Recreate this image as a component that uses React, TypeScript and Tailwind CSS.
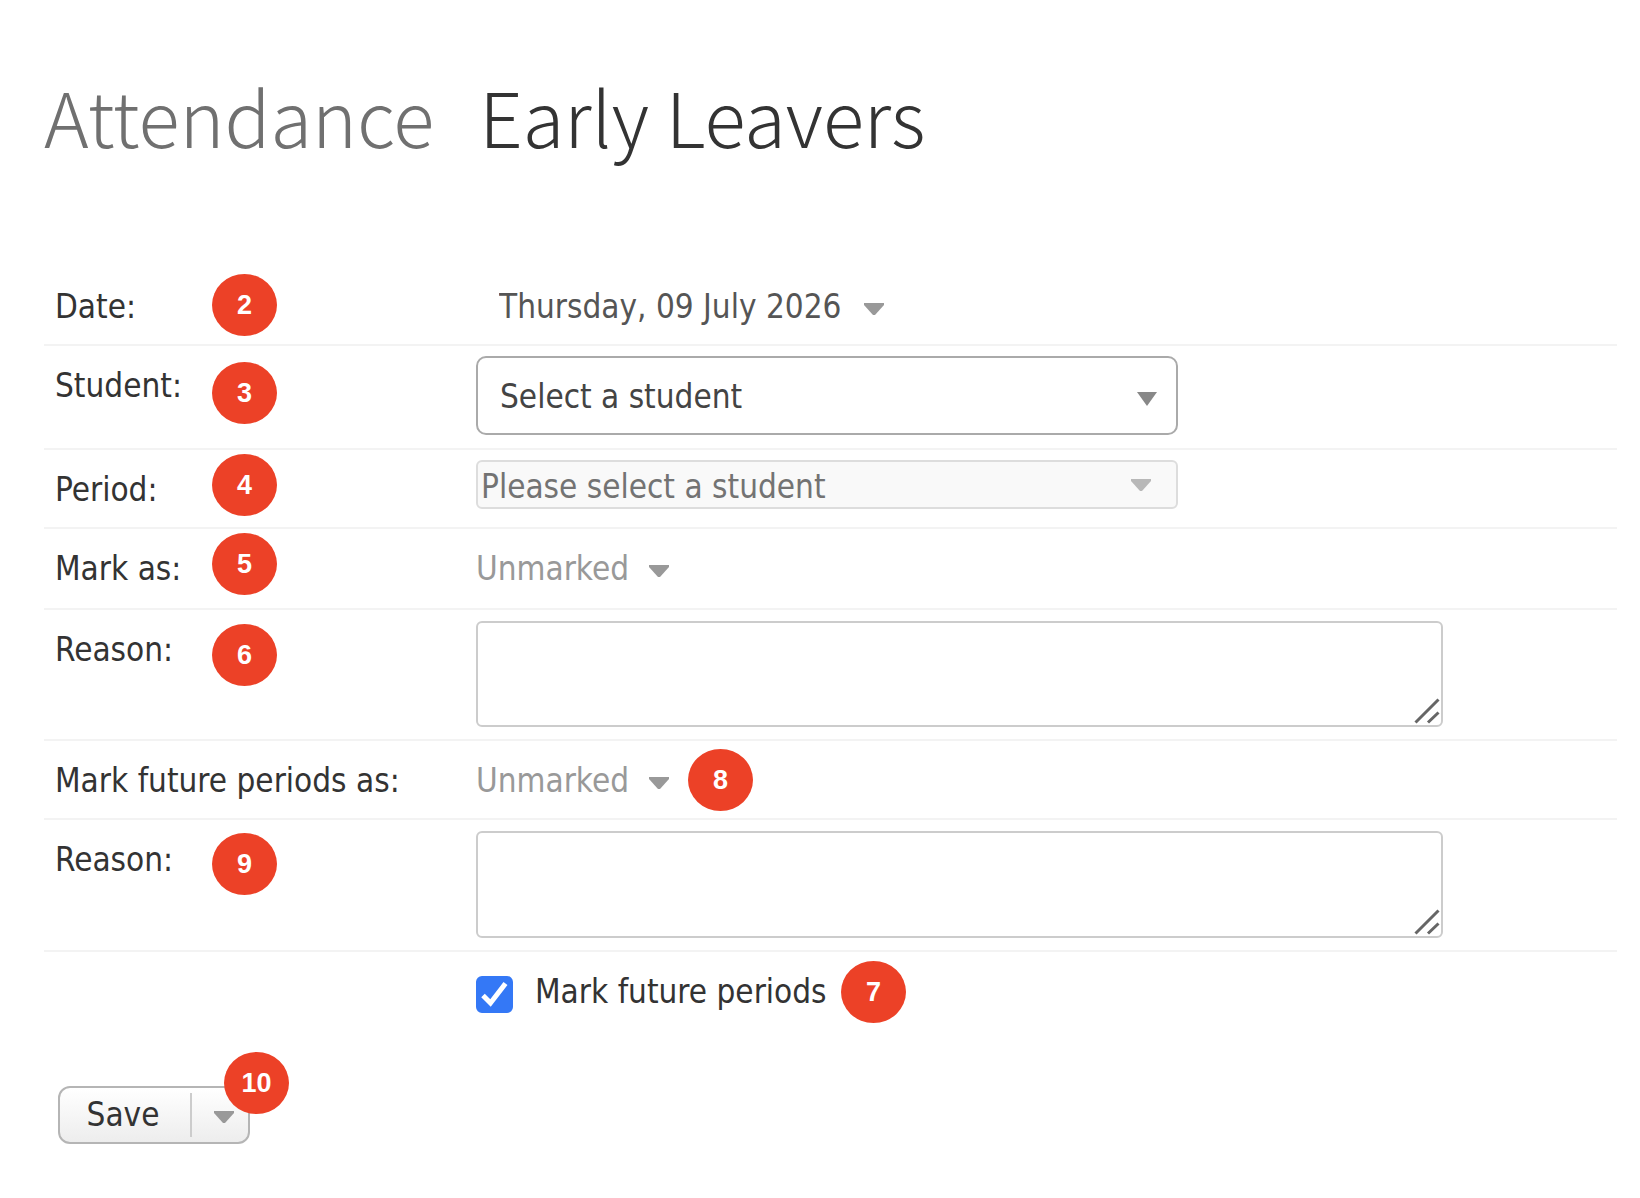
import { useState, type ReactNode } from 'react';
import { clsx } from 'clsx';

function Caret({ className }: { className?: string }) {
  return (
    <svg
      viewBox="0 0 20 12"
      className={clsx('pointer-events-none h-3 w-5 fill-current', className)}
      aria-hidden="true"
    >
      <path d="M0 0H20V2L11 12H9L0 2Z" />
    </svg>
  );
}

function Badge({ value, className }: { value: number; className?: string }) {
  return (
    <span
      className={clsx(
        'absolute flex h-[62px] w-[65px] items-center justify-center rounded-[50%] bg-[#ec4127] font-["Liberation_Sans",sans-serif] text-[27px] leading-none font-bold text-white',
        className
      )}
    >
      {value}
    </span>
  );
}

interface RowProps {
  label: string;
  htmlFor: string;
  className?: string;
  badge?: ReactNode;
  children: ReactNode;
}

function Row({ label, htmlFor, className, badge, children }: RowProps) {
  return (
    <div className={clsx('relative flex border-b-2 border-[#f3f3f3]', className)}>
      <label htmlFor={htmlFor} className="w-[432px] shrink-0 pt-5 pl-[11px]">
        {label}
      </label>
      {children}
      {badge}
    </div>
  );
}

function MarkSelect({ id }: { id: string }) {
  return (
    <div className="relative pt-5">
      <select id={id} className="w-[194px] appearance-none text-[#999]">
        <option>Unmarked</option>
        <option>Present</option>
        <option>Absent</option>
      </select>
      <Caret className="absolute top-9 left-[173px] text-[#999]" />
    </div>
  );
}

function ReasonBox({ id }: { id: string }) {
  return (
    <div className="relative mt-[11px] mb-3 w-[967px]">
      <textarea
        id={id}
        className="block h-full w-full resize-none rounded-md border-2 border-[#ccc] bg-white px-2"
      />
      <svg
        viewBox="0 0 26 26"
        className="pointer-events-none absolute right-[3px] bottom-[3px] size-[26px] stroke-[#666] stroke-[3]"
        aria-hidden="true"
      >
        <path d="M1.5 24.5L24.5 1.5M14 24.5L24.5 14.5" fill="none" />
      </svg>
    </div>
  );
}

export default function App() {
  const [markFuture, setMarkFuture] = useState(true);

  return (
    <main className="min-h-screen bg-white pt-[65px] pr-[23px] pb-12 pl-11 font-['DejaVu_Sans_Condensed','Noto_Sans',sans-serif] text-[33px] leading-10 text-[#333]">
      <h1 className="flex gap-[45px] font-['Noto_Sans_CJK_JP',sans-serif] text-[76px] leading-[100px] font-light whitespace-nowrap">
        <span className="text-[#707070]">Attendance</span>
        <span>Early Leavers</span>
      </h1>

      <form className="mt-[102px]" onSubmit={(e) => e.preventDefault()}>
        <Row
          label="Date:"
          htmlFor="date"
          className="h-[79px]"
          badge={<Badge value={2} className="top-[7px] left-[168px]" />}
        >
          <div className="relative pt-5 pl-[23px]">
            <select id="date" className="w-[388px] appearance-none text-[#555]">
              <option>Thursday, 09 July 2026</option>
            </select>
            <Caret className="absolute top-9 left-[388px] text-[#999]" />
          </div>
        </Row>

        <Row
          label="Student:"
          htmlFor="student"
          className="h-[104px]"
          badge={<Badge value={3} className="top-4 left-[168px]" />}
        >
          <div className="relative pt-2.5">
            <select
              id="student"
              className="h-[79px] w-[702px] appearance-none rounded-[10px] border-2 border-[#aaa] bg-white px-[22px] pt-0.5 text-[#444]"
            >
              <option>Select a student</option>
            </select>
            <svg
              viewBox="0 0 20 14"
              className="pointer-events-none absolute top-[46px] right-[21px] h-3.5 w-5 fill-[#888]"
              aria-hidden="true"
            >
              <path d="M0 0H20L10 14Z" />
            </svg>
          </div>
        </Row>

        <Row
          label="Period:"
          htmlFor="period"
          className="h-[79px]"
          badge={<Badge value={4} className="top-1 left-[168px]" />}
        >
          <div className="relative pt-2.5">
            <select
              id="period"
              disabled
              className="h-[49px] w-[702px] appearance-none rounded-md border-2 border-[#ddd] bg-[#f9f9f9] px-[3px] pt-1 text-[#737373] opacity-100"
            >
              <option>Please select a student</option>
            </select>
            <Caret className="absolute top-[29px] right-[27px] text-[#b8b8b8]" />
          </div>
        </Row>

        <Row
          label="Mark as:"
          htmlFor="mark"
          className="h-[81px]"
          badge={<Badge value={5} className="top-1 left-[168px]" />}
        >
          <MarkSelect id="mark" />
        </Row>

        <Row
          label="Reason:"
          htmlFor="reason"
          className="h-[131px]"
          badge={<Badge value={6} className="top-3.5 left-[168px]" />}
        >
          <ReasonBox id="reason" />
        </Row>

        <Row
          label="Mark future periods as:"
          htmlFor="future-mark"
          className="h-[79px]"
          badge={<Badge value={8} className="top-2 left-[644px]" />}
        >
          <MarkSelect id="future-mark" />
        </Row>

        <Row
          label="Reason:"
          htmlFor="future-reason"
          className="h-[132px]"
          badge={<Badge value={9} className="top-[13px] left-[168px]" />}
        >
          <ReasonBox id="future-reason" />
        </Row>

        <div className="relative flex h-[134px] gap-[22px] pt-5 pl-[432px]">
          <span className="relative mt-1 size-[37px]">
            <input
              id="mark-future"
              type="checkbox"
              checked={markFuture}
              onChange={(e) => setMarkFuture(e.target.checked)}
              className="block size-[37px] appearance-none rounded-md border-2 border-[#aaa] bg-white checked:border-[#3478f6] checked:bg-[#3478f6]"
            />
            {markFuture && (
              <svg
                viewBox="0 0 37 37"
                className="pointer-events-none absolute inset-0 fill-none stroke-white stroke-[5]"
                aria-hidden="true"
              >
                <path d="M7 19.5L14.5 27L29.5 7.5" />
              </svg>
            )}
          </span>
          <label htmlFor="mark-future">Mark future periods</label>
          <Badge value={7} className="top-[9px] left-[797px]" />
        </div>

        <div className="relative ml-3.5 flex h-[58px] w-48 items-center rounded-xl border-2 border-[#b5b5b5] bg-linear-to-b from-white to-[#ededed]">
          <button type="submit" className="h-full w-[130px] pr-1 text-center">
            Save
          </button>
          <button
            type="button"
            aria-label="More save options"
            className="flex h-11 flex-1 items-center justify-center border-l-2 border-[#ccc] pt-1 pl-2"
          >
            <Caret className="text-[#999]" />
          </button>
          <Badge value={10} className="-top-9 left-[164px]" />
        </div>
      </form>
    </main>
  );
}
